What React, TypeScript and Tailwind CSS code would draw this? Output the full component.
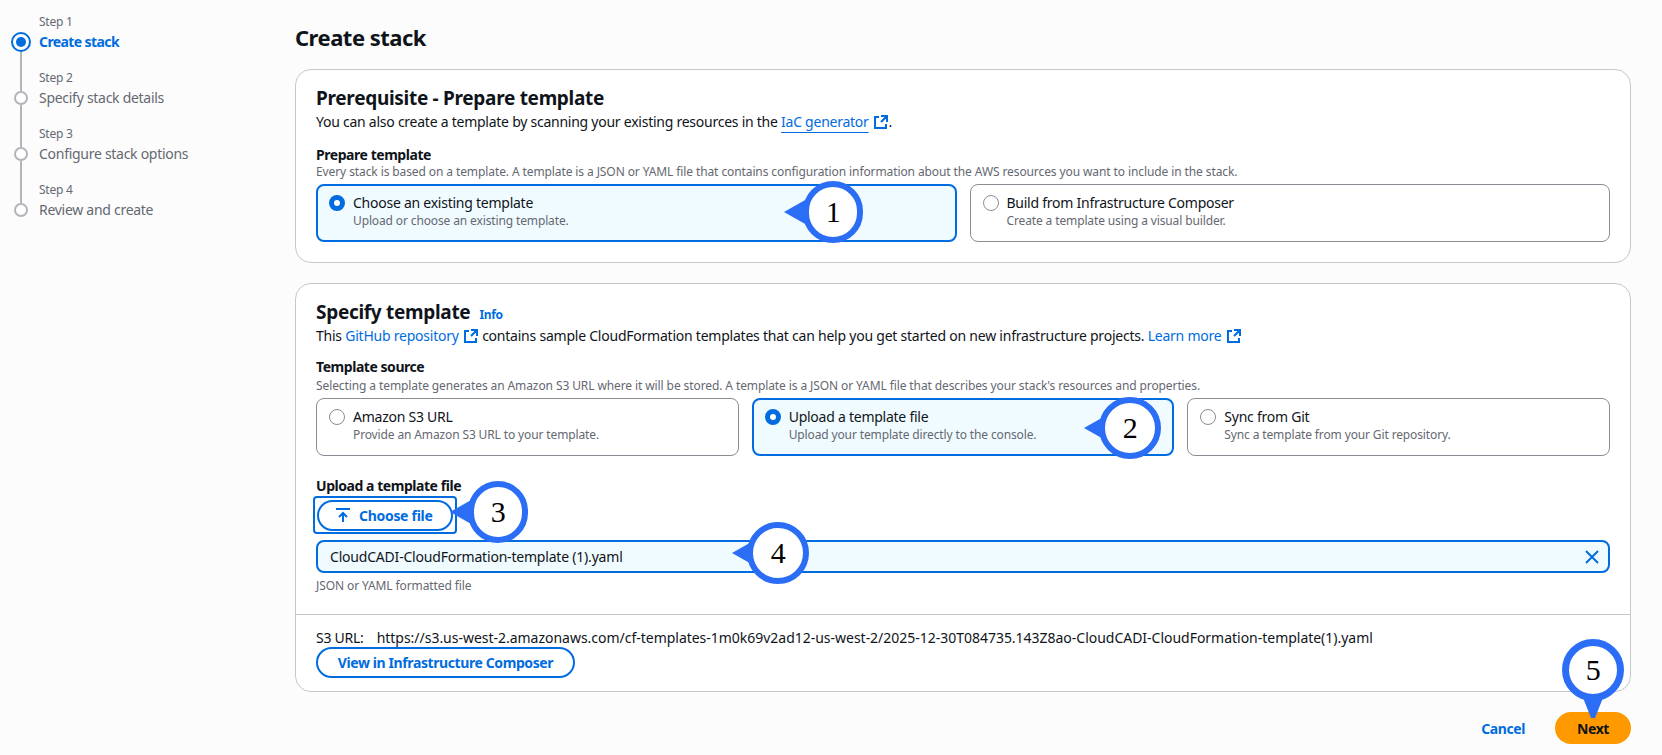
const ExternalIcon = () => (
  <svg viewBox="0 0 16 16" className="inline-block w-4 h-4 ml-[4px] -mt-[3px] align-middle" fill="none" stroke="#006ce0" strokeWidth="2">
    <path d="M14 8V2H8M14 2 8 8M6 3H2v11h11v-4" />
  </svg>
);

const Radio = ({ checked }: { checked?: boolean }) =>
  checked ? (
    <span className="w-4 h-4 shrink-0 rounded-full border-[5px] border-[#006ce0] bg-white" />
  ) : (
    <span className="w-4 h-4 shrink-0 rounded-full border border-[#8c8c94] bg-white" />
  );

const Tile = ({ title, desc, checked }: { title: string; desc: string; checked?: boolean }) => (
  <div
    className={
      checked
        ? "h-[58px] rounded-lg border-2 border-[#006ce0] bg-[#f0fbff] pl-[11px] pt-[7px]"
        : "h-[58px] rounded-lg border border-[#8c8c94] bg-white pl-[12px] pt-[8px]"
    }
  >
    <div className="flex items-center gap-[8px] h-5 text-[14px] leading-5 text-[#0f141a]">
      <Radio checked={checked} />
      {title}
    </div>
    <div className="pl-[24px] text-[12px] leading-4 tracking-[-0.13px] text-[#656871]">{desc}</div>
  </div>
);

const steps = ["Create stack", "Specify stack details", "Configure stack options", "Review and create"];

const Sidebar = () => (
  <aside className="w-[295px] shrink-0 pt-[12px]">
    {steps.map((s, i) => (
      <div key={s} className="flex h-[56px]">
        <div className="w-[42px] flex flex-col items-center">
          {i === 0 ? (
            <>
              <div className="h-[20px]" />
              <div className="w-5 h-5 rounded-full border-2 border-[#006ce0] flex items-center justify-center">
                <div className="w-[10px] h-[10px] rounded-full bg-[#006ce0]" />
              </div>
              <div className="w-[2px] h-[16px] bg-[#b4b4bb]" />
            </>
          ) : (
            <>
              <div className="w-[2px] h-[23px] bg-[#b4b4bb]" />
              <div className="w-[14px] h-[14px] shrink-0 rounded-full border-2 border-[#b4b4bb] bg-white" />
              {i < 3 && <div className="w-[2px] flex-1 bg-[#b4b4bb]" />}
            </>
          )}
        </div>
        <div className="-ml-[3px]">
          <div className="text-[12px] leading-5 text-[#656871]">Step {i + 1}</div>
          <div
            className={
              i === 0
                ? "text-[14px] leading-5 font-bold tracking-[-0.6px] text-[#006ce0]"
                : "text-[14px] leading-5 tracking-[-0.28px] text-[#656871]"
            }
          >
            {s}
          </div>
        </div>
      </div>
    ))}
  </aside>
);

const Callout = ({ n, dir, box, circle, arrow }: { n: number; dir: "left" | "down"; box: string; circle: string; arrow: string }) => (
  <div className={"absolute " + box}>
    <svg viewBox="0 0 30 34" className={"absolute " + arrow} fill="#2b6ef5">
      {dir === "left" ? <path d="M0 17 30 0v34z" /> : <path d="M0 0h30L17 33h-4z" />}
    </svg>
    <div className={"absolute inset-0 rounded-full bg-white border-[#2b6ef5] flex items-center justify-center text-[30px] leading-none text-black font-['Liberation_Serif',serif] " + circle}>
      {n}
    </div>
  </div>
);

export default function App() {
  return (
    <div className="relative flex h-[755px] overflow-hidden bg-[#fcfcfc] font-['Noto_Sans',sans-serif] tracking-[-0.25px] text-[#0f141a]">
      <Sidebar />
      <main className="w-[1336px] pt-[21px]">
        <h1 className="text-[22px] leading-8 font-bold tracking-[-0.5px]">Create stack</h1>

        <section className="mt-4 h-[194px] rounded-2xl border border-[#c6c6cd] bg-white px-5 pt-[17px]">
          <h2 className="text-[19px] leading-[22px] font-bold tracking-[-0.3px]">Prerequisite - Prepare template</h2>
          <p className="mt-[3px] text-[14px] leading-5">
            You can also create a template by scanning your existing resources in the{" "}
            <a className="text-[#006ce0] underline underline-offset-[5px]">IaC generator</a>
            <ExternalIcon />.
          </p>
          <div className="mt-[14px] text-[14px] leading-[18px] font-bold tracking-[-0.45px]">Prepare template</div>
          <div className="text-[12px] leading-4 tracking-[-0.1px] text-[#656871]">
            Every stack is based on a template. A template is a JSON or YAML file that contains configuration information about the AWS resources you want to include in the stack.
          </div>
          <div className="mt-1 grid grid-cols-2 gap-[13px]">
            <Tile checked title="Choose an existing template" desc="Upload or choose an existing template." />
            <Tile title="Build from Infrastructure Composer" desc="Create a template using a visual builder." />
          </div>
        </section>

        <section className="mt-5 h-[409px] rounded-2xl border border-[#c6c6cd] bg-white flex flex-col">
          <div className="px-5 pt-[17px] h-[330px]">
            <h2 className="flex items-baseline h-[22px] text-[19px] leading-[22px] font-bold tracking-[-0.3px]">
              Specify template
              <a className="ml-[9px] text-[12px] font-bold tracking-[-0.3px] text-[#006ce0]">Info</a>
            </h2>
            <p className="mt-[3px] h-5 text-[14px] leading-5 tracking-[-0.23px]">
              This <a className="text-[#006ce0]">GitHub repository</a>
              <ExternalIcon /> contains sample CloudFormation templates that can help you get started on new infrastructure projects.{" "}
              <a className="text-[#006ce0]">Learn more</a>
              <ExternalIcon />
            </p>
            <div className="mt-3 text-[14px] leading-[18px] font-bold tracking-[-0.45px]">Template source</div>
            <div className="mt-[2px] text-[12px] leading-4 tracking-[-0.1px] text-[#656871]">
              Selecting a template generates an Amazon S3 URL where it will be stored. A template is a JSON or YAML file that describes your stack's resources and properties.
            </div>
            <div className="mt-1 grid grid-cols-3 gap-[13px]">
              <Tile title="Amazon S3 URL" desc="Provide an Amazon S3 URL to your template." />
              <Tile checked title="Upload a template file" desc="Upload your template directly to the console." />
              <Tile title="Sync from Git" desc="Sync a template from your Git repository." />
            </div>
            <div className="mt-[21px] text-[14px] leading-[18px] font-bold tracking-[-0.45px]">Upload a template file</div>
            <div className="mt-[1px] -ml-[3px] w-[144px] h-[38px] rounded-[4px] border-2 border-[#006ce0] flex items-center justify-center">
              <button className="w-[136px] h-[31px] rounded-full border-2 border-[#006ce0] flex items-center gap-[8px] pl-4 text-[14px] font-bold tracking-[-0.3px] text-[#006ce0]">
                <svg viewBox="0 0 16 16" className="w-4 h-4" fill="none" stroke="#006ce0" strokeWidth="2">
                  <path d="M1 2h14M8 15V6M4 10l4-4 4 4" />
                </svg>
                Choose file
              </button>
            </div>
            <div className="mt-[6px] h-[33px] rounded-lg border-2 border-[#006ce0] bg-[#f0fbff] flex items-center justify-between pl-[12px] pr-[8px] text-[14px] tracking-[-0.2px]">
              <span>CloudCADI-CloudFormation-template (1).yaml</span>
              <svg viewBox="0 0 16 16" className="w-4 h-4" fill="none" stroke="#006ce0" strokeWidth="2">
                <path d="m2 2 12 12M14 2 2 14" />
              </svg>
            </div>
            <div className="mt-[5px] text-[12px] leading-4 tracking-[-0.1px] text-[#656871]">JSON or YAML formatted file</div>
          </div>
          <div className="border-t border-[#c6c6cd] px-5 pt-[14px]">
            <div className="flex gap-[13px] text-[14px] leading-[18px]">
              <span>S3 URL:</span>
              <span className="tracking-[-0.02px]">https://s3.us-west-2.amazonaws.com/cf-templates-1m0k69v2ad12-us-west-2/2025-12-30T084735.143Z8ao-CloudCADI-CloudFormation-template(1).yaml</span>
            </div>
            <button className="w-[259px] h-[31px] rounded-full border-2 border-[#006ce0] text-[14px] font-bold tracking-[-0.4px] text-[#006ce0]">
              View in Infrastructure Composer
            </button>
          </div>
        </section>

        <div className="mt-5 flex items-center justify-end gap-[30px]">
          <a className="text-[14px] font-bold tracking-[-0.4px] text-[#006ce0]">Cancel</a>
          <button className="w-[76px] h-8 rounded-full bg-[#ff9900] text-[14px] font-bold tracking-[-0.4px] text-[#0f141a]">Next</button>
        </div>
      </main>

      <Callout n={1} dir="left" box="left-[803px] top-[181px] w-[60px] h-[62px]" circle="border-[6px]" arrow="-left-[21px] top-[14px] w-[34px] h-[34px]" />
      <Callout n={2} dir="left" box="left-[1099px] top-[397px] w-[62px] h-[62px]" circle="border-[6px]" arrow="-left-[17px] top-[14px] w-[34px] h-[34px]" />
      <Callout n={3} dir="left" box="left-[468px] top-[481px] w-[60px] h-[62px]" circle="border-[6px]" arrow="-left-[20px] top-[14px] w-[34px] h-[34px]" />
      <Callout n={4} dir="left" box="left-[747px] top-[522px] w-[62px] h-[62px]" circle="border-[6px]" arrow="-left-[17px] top-[14px] w-[34px] h-[34px]" />
      <Callout n={5} dir="down" box="left-[1562px] top-[639px] w-[62px] h-[62px]" circle="border-[7px]" arrow="left-[15px] top-[46px] w-[32px] h-[34px]" />
    </div>
  );
}
